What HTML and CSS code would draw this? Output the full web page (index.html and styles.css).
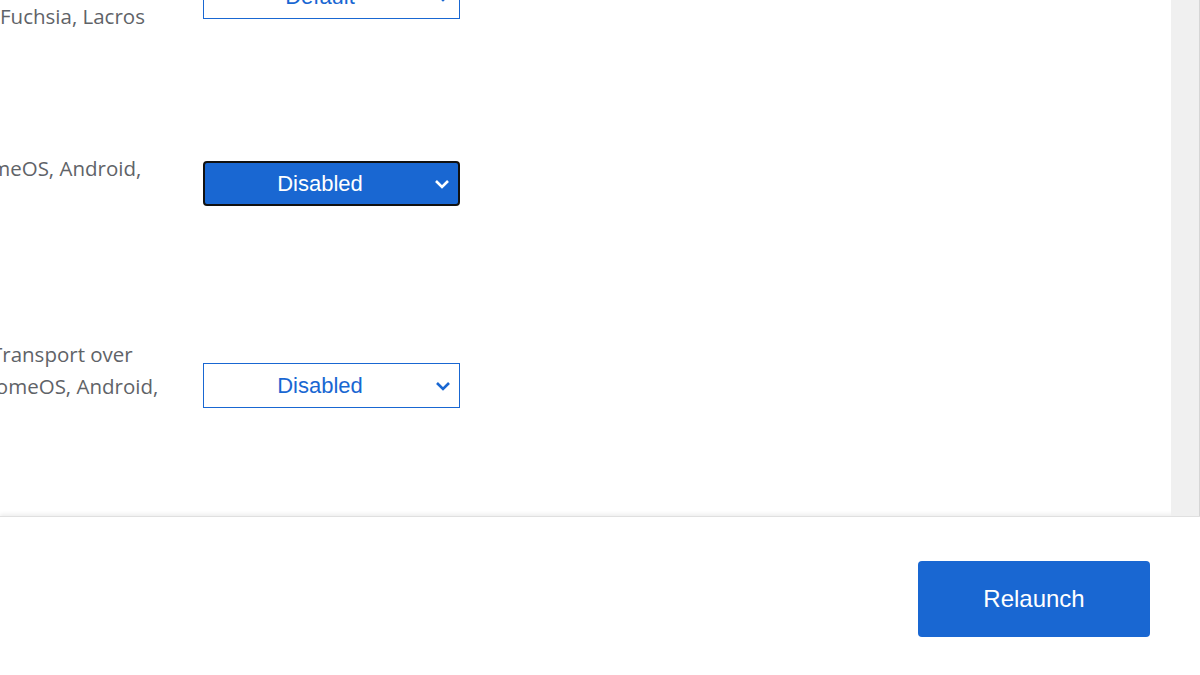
FILE: index.html
```html
<!DOCTYPE html>
<html lang="en">
<head>
  <meta charset="UTF-8">
  <title>Experiments</title>
  <link rel="stylesheet" href="styles.css">
</head>
<body>
  <div class="main">
    <div class="content">
      <div class="flag flag-first">
        <div class="desc desc-first">
          <span class="line">Fuchsia, Lacros</span>
        </div>
        <div class="select-wrap">
          <div class="select">Default
            <svg class="chev" width="16" height="10" viewBox="0 0 16 10"><polyline points="2,2 8,8 14,2"/></svg>
          </div>
        </div>
      </div>
      <div class="flag flag-second">
        <div class="desc">
          <span class="line cut-a">ChromeOS, Android,</span>
        </div>
        <div class="select-wrap wrap-second">
          <div class="select active">Disabled
            <svg class="chev" width="16" height="10" viewBox="0 0 16 10"><polyline points="2,2 8,8 14,2"/></svg>
          </div>
        </div>
      </div>
      <div class="flag">
        <div class="desc">
          <span class="line cut-b">WebTransport over</span>
          <span class="line cut-c">ChromeOS, Android,</span>
        </div>
        <div class="select-wrap wrap-third">
          <div class="select">Disabled
            <svg class="chev" width="16" height="10" viewBox="0 0 16 10"><polyline points="2,2 8,8 14,2"/></svg>
          </div>
        </div>
      </div>
    </div>
    <div class="scrollbar"></div>
  </div>
  <div class="footer">
    <button class="relaunch">Relaunch</button>
  </div>
</body>
</html>
```

FILE: styles.css
```css
body {
  margin: 0;
  width: 1200px;
  height: 675px;
  overflow: hidden;
  background: #fff;
  font-family: "Open Sans", "Noto Sans", sans-serif;
}
.main {
  display: flex;
  height: 516px;
  overflow: hidden;
}
.content {
  flex: 1;
  overflow: hidden;
}
.scrollbar {
  width: 28px;
  background: #f0f0f0;
  border-right: 1px solid #d6d6d6;
}
.flag {
  display: flex;
  height: 186px;
}
.flag-first {
  height: 178px;
  margin-top: -26px;
}
.desc {
  width: 203px;
  overflow: hidden;
  color: #5f6368;
  font-size: 20.5px;
  line-height: 32px;
  white-space: nowrap;
}
.desc-first {
  padding-top: 26px;
}
.line {
  display: block;
}
.cut-a {
  margin-left: -55px;
}
.cut-b {
  margin-left: -52px;
}
.cut-c {
  margin-left: -38px;
}
.select-wrap {
  width: 257px;
}
.wrap-second {
  margin-top: 9px;
}
.wrap-third {
  margin-top: 25px;
}
.select {
  position: relative;
  height: 43px;
  padding-right: 23px;
  border: 1px solid #1967d2;
  color: #1967d2;
  font-family: "Liberation Sans", Arial, sans-serif;
  font-size: 22px;
  line-height: 43px;
  text-align: center;
  box-sizing: content-box;
  width: 232px;
}
.select.active {
  height: 41px;
  width: 230px;
  line-height: 41px;
  background: #1967d2;
  color: #fff;
  border: 2px solid #111;
  border-radius: 4px;
}
.chev {
  position: absolute;
  right: 8px;
  top: 50%;
  margin-top: -5px;
  fill: none;
  stroke: currentColor;
  stroke-width: 2.6;
}
.footer {
  height: 159px;
  border-top: 1px solid #e0e0e0;
  box-shadow: 0 -2px 4px rgba(0, 0, 0, 0.07);
  display: flex;
  justify-content: flex-end;
  align-items: flex-start;
  padding-right: 50px;
}
.relaunch {
  margin-top: 44px;
  width: 232px;
  height: 76px;
  background: #1967d2;
  color: #fff;
  border: none;
  border-radius: 4px;
  font-family: "Liberation Sans", Arial, sans-serif;
  font-size: 24px;
  font-weight: 500;
}
```
